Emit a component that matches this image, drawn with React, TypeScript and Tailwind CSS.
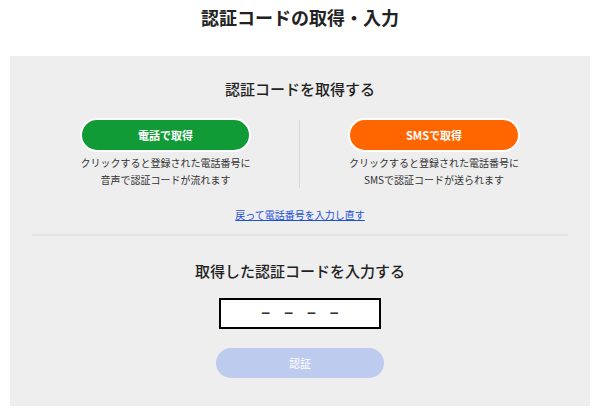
export default function App() {
  return (
    <div className="w-[600px] h-[411px] bg-white text-[#222] font-['Noto_Sans_CJK_JP','Noto_Sans',sans-serif] overflow-hidden">
      <h1 className="h-[56px] pt-[5px] text-center text-[18px] leading-[24px] font-bold">
        認証コードの取得・入力
      </h1>

      <div className="mx-[10px] h-[350px] bg-[#eeeeee] px-[22px] pt-[23px]">
        <h2 className="text-center text-[15px] leading-[20px] font-medium">
          認証コードを取得する
        </h2>

        <div className="mt-[21px] grid grid-cols-2">
          <div className="flex flex-col items-center border-r border-[#dcd8e0]">
            <button className="w-[167px] h-[30px] rounded-full bg-[#119b37] ring-2 ring-white text-white text-[11px] font-bold">
              電話で取得
            </button>
            <p className="mt-[4px] text-center text-[10px] leading-[17px] text-[#333]">
              クリックすると登録された電話番号に
              <br />
              音声で認証コードが流れます
            </p>
          </div>
          <div className="flex flex-col items-center">
            <button className="w-[168px] h-[30px] rounded-full bg-[#ff6600] ring-2 ring-white text-white text-[11px] font-bold">
              SMSで取得
            </button>
            <p className="mt-[4px] text-center text-[10px] leading-[17px] text-[#333]">
              クリックすると登録された電話番号に
              <br />
              SMSで認証コードが送られます
            </p>
          </div>
        </div>

        <div className="mt-[19px] text-center text-[10px] leading-[16px]">
          <a href="#" className="text-[#1d4fd8] underline">
            戻って電話番号を入力し直す
          </a>
        </div>

        <div className="mt-[11px] h-[2px] bg-[#e3e3e3]" />

        <h2 className="mt-[25px] text-center text-[15px] leading-[20px] font-medium">
          取得した認証コードを入力する
        </h2>

        <div className="mt-[17px] flex justify-center">
          <div className="w-[162px] h-[31px] border-2 border-black bg-white flex items-center justify-center gap-[14px] text-[15px] font-bold text-[#333]">
            <span>−</span>
            <span>−</span>
            <span>−</span>
            <span>−</span>
          </div>
        </div>

        <div className="mt-[19px] flex justify-center">
          <button className="w-[168px] h-[30px] rounded-full bg-[#bdcbef] text-white text-[11px]">
            認証
          </button>
        </div>
      </div>
    </div>
  );
}
